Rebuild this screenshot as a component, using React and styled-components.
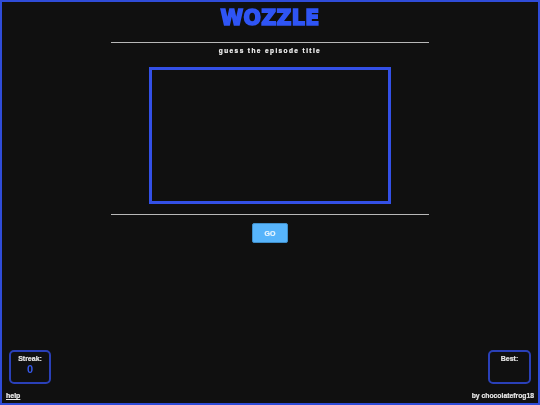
import React from "react";
import styled, { createGlobalStyle } from "styled-components";

const Global = createGlobalStyle`
  html, body { margin: 0; padding: 0; background: #101010; }
  * { box-sizing: border-box; }
`;
const Page = styled.div`
  width: 540px; height: 405px;
  border: 2px solid #2f4cd8;
  background: #101010;
  display: flex; flex-direction: column; align-items: center;
  font-family: "Liberation Sans", Arial, sans-serif;
  color: #eee;
  overflow: hidden;
  filter: opacity(0.999);
`;
const Title = styled.h1`
  margin: 4px 0 0; height: 24px;
  font-family: "DejaVu Sans", sans-serif;
  font-weight: 700; font-size: 20.5px; line-height: 24px;
  letter-spacing: 0.4px;
  color: #2f55f5;
  -webkit-text-stroke: 1.7px #2f55f5;
`;
const Rule = styled.div`
  width: 318px; height: 1px; background: #b8b8b8; flex: none;
  margin-top: ${p => p.$top}px;
`;
const Prompt = styled.div`
  margin-top: 4px; height: 8px;
  font-size: 6.5px; line-height: 8px; font-weight: 700;
  letter-spacing: 1.4px;
  color: #f4f4f4;
  -webkit-text-stroke: 0.2px #f4f4f4;
`;
const Screen = styled.div`
  width: 242px; height: 137px; flex: none;
  margin-top: 12px;
  border: 3px solid #3350e6;
  background: #101010;
`;
const Go = styled.button`
  margin-top: 8px; width: 36px; height: 20px; padding: 0;
  background: #57b4fb;
  border: 1px solid #3f8ec8;
  border-radius: 2px;
  color: #eaf6ff;
  font-family: inherit; font-size: 7px; font-weight: 700;
  -webkit-text-stroke: 0.2px #eaf6ff;
`;
const Bottom = styled.div`
  margin-top: auto; width: 100%;
  padding: 0 4px 3px 4px;
  display: flex; flex-direction: column; gap: 8px;
`;
const Row = styled.div`
  display: flex; justify-content: space-between; align-items: flex-end;
`;
const Stat = styled.div`
  width: ${p => (p.$right ? 43 : 42)}px; height: 34px;
  margin: 0 ${p => (p.$right ? 3 : 0)}px 0 ${p => (p.$right ? 0 : 3)}px;
  border: 2px solid #2a40b8;
  border-radius: 5px;
  display: flex; flex-direction: column; align-items: center;
  padding-top: 3px;
`;
const StatLabel = styled.div`
  font-size: 7px; line-height: 8px; font-weight: 700; color: #e6e6e6;
  -webkit-text-stroke: 0.2px #e6e6e6;
`;
const StatValue = styled.div`
  font-size: 11px; line-height: 11px; margin-top: 1px; color: #3658e8; font-weight: 700;
`;
const Help = styled.a`
  font-size: 7px; line-height: 8px; font-weight: 700; color: #eee; text-decoration: underline;
  -webkit-text-stroke: 0.2px #eee;
`;
const Credit = styled.span`
  font-size: 6.8px; line-height: 8px; font-weight: 700; color: #e6e6e6;
  -webkit-text-stroke: 0.2px #e6e6e6;
`;

export default function App() {
  return (
    <>
      <Global />
      <Page>
        <Title>WOZZLE</Title>
        <Rule $top={12} />
        <Prompt>guess the episode title</Prompt>
        <Screen />
        <Rule $top={10} />
        <Go>GO</Go>
        <Bottom>
          <Row>
            <Stat>
              <StatLabel>Streak:</StatLabel>
              <StatValue>0</StatValue>
            </Stat>
            <Stat $right>
              <StatLabel>Best:</StatLabel>
            </Stat>
          </Row>
          <Row>
            <Help>help</Help>
            <Credit>by chocolatefrog18</Credit>
          </Row>
        </Bottom>
      </Page>
    </>
  );
}
